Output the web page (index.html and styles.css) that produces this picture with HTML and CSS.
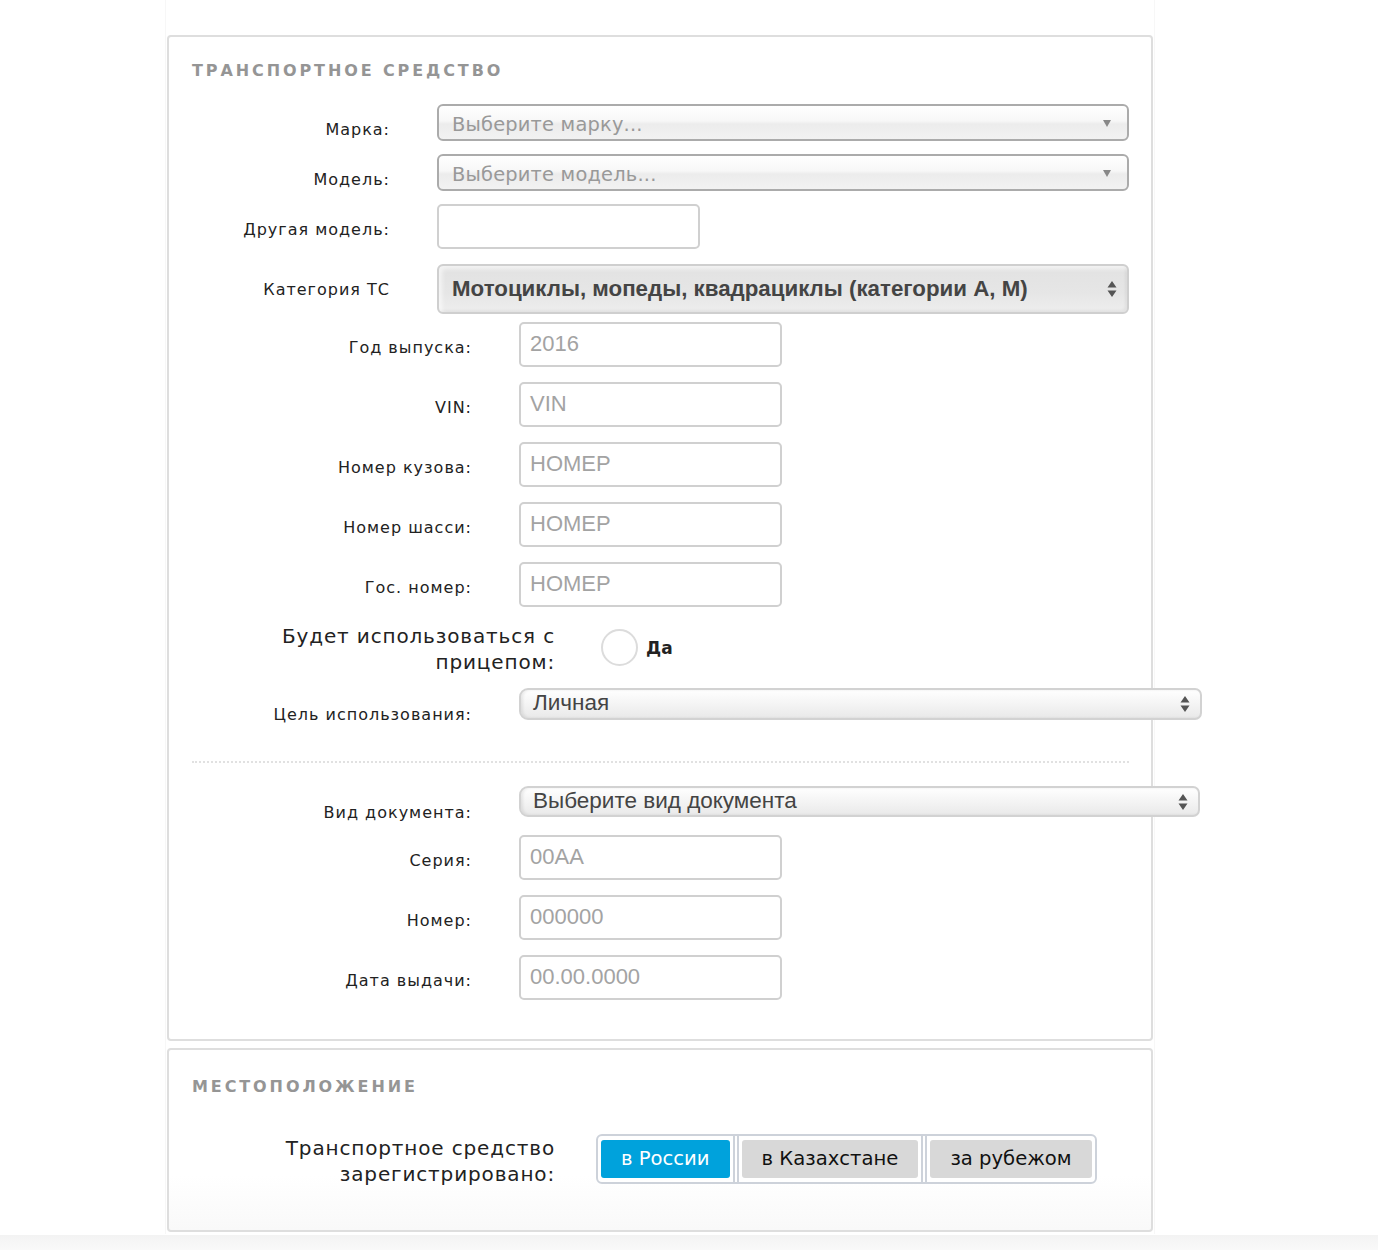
FILE: index.html
```html
<!DOCTYPE html>
<html lang="ru">
<head>
<meta charset="utf-8">
<title>Транспортное средство</title>
<link rel="stylesheet" href="styles.css">
</head>
<body>
<div class="page">
  <section class="card card-vehicle">
    <h2 class="card-title">Транспортное средство</h2>

    <div class="row row-a">
      <label class="lbl">Марка:</label>
      <div class="sel sel-chosen sel-wide"><span class="ph">Выберите марку...</span><span class="tri"></span></div>
    </div>
    <div class="row row-a">
      <label class="lbl">Модель:</label>
      <div class="sel sel-chosen sel-wide"><span class="ph">Выберите модель...</span><span class="tri"></span></div>
    </div>
    <div class="row row-a">
      <label class="lbl">Другая модель:</label>
      <div class="inp"></div>
    </div>
    <div class="row row-a row-cat">
      <label class="lbl">Категория ТС</label>
      <div class="sel sel-cat sel-wide"><span class="val-bold">Мотоциклы, мопеды, квадрациклы (категории A, M)</span><span class="updown"><svg width="10" height="18" viewBox="0 0 10 18"><path d="M5 1 L9.5 7.5 H0.5 Z M5 17 L9.5 10.5 H0.5 Z" fill="#555"/></svg></span></div>
    </div>

    <div class="row row-b row-yr">
      <label class="lbl">Год выпуска:</label>
      <div class="inp"><span class="ph2">2016</span></div>
    </div>
    <div class="row row-b">
      <label class="lbl">VIN:</label>
      <div class="inp"><span class="ph2">VIN</span></div>
    </div>
    <div class="row row-b">
      <label class="lbl">Номер кузова:</label>
      <div class="inp"><span class="ph2">НОМЕР</span></div>
    </div>
    <div class="row row-b">
      <label class="lbl">Номер шасси:</label>
      <div class="inp"><span class="ph2">НОМЕР</span></div>
    </div>
    <div class="row row-b">
      <label class="lbl">Гос. номер:</label>
      <div class="inp"><span class="ph2">НОМЕР</span></div>
    </div>

    <div class="row row-c row-trailer">
      <label class="lbl lbl-big">Будет использоваться с прицепом:</label>
      <div class="radio-wrap"><span class="radio"></span><span class="radio-txt">Да</span></div>
    </div>

    <div class="row row-b row-goal">
      <label class="lbl">Цель использования:</label>
      <div class="sel sel-native sel-goal"><span class="val">Личная</span><span class="updown"><svg width="10" height="18" viewBox="0 0 10 18"><path d="M5 1 L9.5 7.5 H0.5 Z M5 17 L9.5 10.5 H0.5 Z" fill="#555"/></svg></span></div>
    </div>

    <hr class="dots">

    <div class="row row-b row-doc">
      <label class="lbl">Вид документа:</label>
      <div class="sel sel-native sel-doc"><span class="val">Выберите вид документа</span><span class="updown"><svg width="10" height="18" viewBox="0 0 10 18"><path d="M5 1 L9.5 7.5 H0.5 Z M5 17 L9.5 10.5 H0.5 Z" fill="#555"/></svg></span></div>
    </div>
    <div class="row row-b row-ser">
      <label class="lbl">Серия:</label>
      <div class="inp"><span class="ph2">00AA</span></div>
    </div>
    <div class="row row-b">
      <label class="lbl">Номер:</label>
      <div class="inp"><span class="ph2">000000</span></div>
    </div>
    <div class="row row-b">
      <label class="lbl">Дата выдачи:</label>
      <div class="inp"><span class="ph2">00.00.0000</span></div>
    </div>
  </section>

  <section class="card card-loc">
    <h2 class="card-title">Местоположение</h2>
    <div class="row row-c row-reg">
      <label class="lbl lbl-big">Транспортное средство зарегистрировано:</label>
      <div class="seg">
        <div class="seg-cell"><span class="seg-btn seg-on">в России</span></div>
        <div class="seg-cell"><span class="seg-btn">в Казахстане</span></div>
        <div class="seg-cell"><span class="seg-btn">за рубежом</span></div>
      </div>
    </div>
  </section>
</div>
<div class="footer-band"></div>
</body>
</html>
```

FILE: styles.css
```css
html, body {
  margin: 0;
  padding: 0;
  background: #ffffff;
}

body {
  font-family: "DejaVu Sans", Verdana, sans-serif;
  color: #222;
}

.page {
  margin-left: 165px;
  width: 990px;
  border-left: 1px solid #f7f7f7;
  border-right: 1px solid #f7f7f7;
  padding-top: 35px;
  padding-bottom: 2px;
  box-sizing: border-box;
}

.card {
  margin: 0 1px;
  border: 2px solid #dedede;
  border-radius: 4px;
  padding: 24px 23px 39px 23px;
  background: #fff;
}

.card-loc {
  margin-top: 7px;
  padding-top: 27px;
  padding-bottom: 43px;
  background: linear-gradient(to bottom, #fff 0%, #fff 70%, #f9f9f9 100%);
}

.card-title {
  margin: 0;
  font-size: 16px;
  line-height: 20px;
  font-weight: bold;
  letter-spacing: 2.9px;
  text-transform: uppercase;
  color: #959595;
}

.row {
  display: flex;
  align-items: flex-start;
}

.lbl {
  flex: none;
  text-align: right;
  font-size: 16px;
  line-height: 20px;
  letter-spacing: 1px;
  padding-top: 16px;
  color: #222;
  box-sizing: border-box;
}

.row-a .lbl { width: 198px; margin-right: 47px; }
.row-b .lbl { width: 280px; margin-right: 47px; }
.row-c .lbl { width: 363px; margin-right: 46px; }

.row-a { margin-top: 13px; }
.card-title + .row-a { margin-top: 23px; }
.row-a.row-cat { margin-top: 15px; }
.row-b { margin-top: 15px; }
.row-b.row-yr { margin-top: 8px; }
.row-c.row-trailer { margin-top: 15px; }

.lbl-big {
  font-size: 20px;
  line-height: 26px;
  letter-spacing: 0.85px;
  padding-top: 1px;
}

/* select boxes */
.sel {
  flex: none;
  position: relative;
  box-sizing: border-box;
  display: flex;
  align-items: center;
  font-family: "Liberation Sans", Arial, sans-serif;
}

.sel-wide { width: 692px; }

.sel-chosen {
  height: 37px;
  border: 2px solid #ababab;
  border-radius: 6px;
  background: linear-gradient(to bottom, #ffffff 0%, #f7f7f7 45%, #ececec 55%, #f2f2f2 100%);
  padding-left: 13px;
  padding-top: 3px;
}

.sel-chosen .ph {
  font-family: "DejaVu Sans", Verdana, sans-serif;
  font-size: 19.4px;
  letter-spacing: 0.2px;
  color: #999;
}

.tri {
  position: absolute;
  right: 16px;
  top: 14px;
  width: 0;
  height: 0;
  border-left: 4.5px solid transparent;
  border-right: 4.5px solid transparent;
  border-top: 7px solid #888;
}

.sel-cat {
  height: 50px;
  border: 2px solid #cfcfcf;
  border-radius: 6px;
  background: linear-gradient(to bottom, #e2e2e2 0%, #e6e6e6 60%, #eeeeee 100%);
  box-shadow: inset 3px 3px 4px rgba(255,255,255,0.6), inset -2px -2px 3px rgba(0,0,0,0.05);
  padding-left: 13px;
}

.val-bold {
  font-weight: bold;
  font-size: 22.3px;
  color: #444;
}

.updown {
  position: absolute;
  right: 10px;
  top: 50%;
  transform: translateY(-50%);
  display: flex;
}

.sel-native {
  border: 2px solid #d2d2d2;
  border-radius: 9px 7px 7px 9px;
  background: linear-gradient(to bottom, #ffffff 0%, #f4f4f4 50%, #e9e9e9 100%);
  box-shadow: inset 2px 0 3px rgba(0,0,0,0.08);
  padding-left: 12px;
  align-items: flex-start;
}

.sel-native .val {
  font-size: 22.5px;
  line-height: 26px;
  color: #444;
}

.sel-goal { width: 683px; height: 32px; }
.sel-doc { width: 681px; height: 31px; }

.row-goal .lbl { padding-top: 17px; }
.row-doc .lbl { padding-top: 17px; }
.row-b.row-goal { margin-top: 13px; }

/* inputs */
.inp {
  flex: none;
  box-sizing: border-box;
  width: 263px;
  height: 45px;
  border: 2px solid #d0d0d0;
  border-radius: 5px;
  background: #fff;
  padding-left: 9px;
  display: flex;
  align-items: center;
  font-family: "Liberation Sans", Arial, sans-serif;
}

.ph2 {
  font-size: 22px;
  color: #a3a3a3;
  margin-top: -2px;
}

/* radio */
.radio-wrap {
  display: flex;
  align-items: center;
  margin-top: 7px;
}

.radio {
  box-sizing: border-box;
  width: 37px;
  height: 37px;
  border: 2px solid #dcdcdc;
  border-radius: 50%;
  background: #fff;
  margin-right: 8px;
}

.radio-txt {
  font-weight: bold;
  font-size: 17px;
  color: #222;
  margin-top: 1px;
}

.dots {
  margin: 36px 0 0 0;
  border: 0;
  border-top: 2px dotted #e1e1e1;
  height: 0;
  width: 937px;
}

.row-b.row-doc { margin-top: 23px; }
.row-b.row-ser { margin-top: 12px; }

/* location */
.row-c.row-reg { margin-top: 37px; }
.row-reg .lbl { margin-right: 41px; }

.seg {
  flex: none;
  display: flex;
  border: 2px solid #cdd2da;
  border-radius: 6px;
  background: #fff;
}

.seg-cell {
  padding: 4px 3px;
}

.seg-cell + .seg-cell {
  border-left: 6px double #cdd2da;
}

.seg-btn {
  display: block;
  height: 38px;
  line-height: 38px;
  padding: 0 20px;
  font-size: 19.6px;
  color: #111;
  background: #d8d8d8;
  border-radius: 3px;
}

.seg-on {
  background: #00a2dc;
  color: #fff;
}

.footer-band {
  height: 17px;
  background: linear-gradient(to bottom, #f3f3f3, #fafafa);
  margin-top: 1px;
}
```
